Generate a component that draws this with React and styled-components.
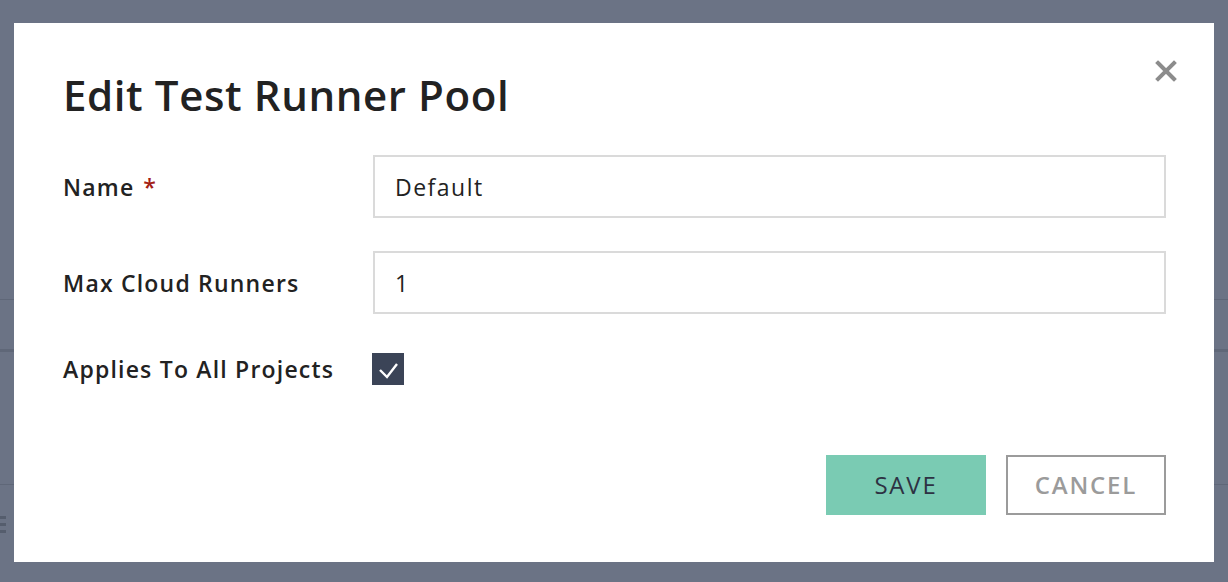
import React from 'react'
import styled, { createGlobalStyle } from 'styled-components'

const GlobalStyle = createGlobalStyle`
  html, body {
    margin: 0;
    padding: 0;
    height: 100%;
  }
  body {
    font-family: "Open Sans", "Liberation Sans", sans-serif;
    background: #6b7385;
    overflow: hidden;
  }
`;

// dimmed page lying behind the dialog
const Page = styled.div`
  width: 100vw;
  height: 100vh;
  display: flex;
  flex-direction: column;
  background: #6b7385;
`;

const PageRow = styled.div`
  height: ${p => p.h}px;
  flex-shrink: 0;
  border-bottom: ${p => p.line}px solid #5f6778;
`;

const MenuIcon = styled.div`
  margin-top: 31px;
  width: 6px;
  display: flex;
  flex-direction: column;
  gap: 4px;

  span {
    height: 3px;
    background: #555d6d;
  }
`;

const Overlay = styled.div`
  position: fixed;
  inset: 0;
  display: flex;
  padding: 23px 14px 0 14px;
  box-sizing: border-box;
`;

const Modal = styled.div`
  position: relative;
  width: 1200px;
  height: 539px;
  box-sizing: border-box;
  background: #ffffff;
  padding: 48px 48px 47px 49px;
  display: flex;
  flex-direction: column;
`;

const Close = styled.button`
  position: absolute;
  top: 37px;
  right: 37px;
  width: 22px;
  height: 22px;
  padding: 0;
  border: none;
  background: transparent;
  cursor: pointer;
  display: flex;
`;

const Title = styled.h1`
  margin: 0;
  font-size: 42px;
  line-height: 48px;
  font-weight: 600;
  letter-spacing: 0.6px;
  color: #222222;
`;

const Form = styled.div`
  margin-top: 36px;
  display: grid;
  grid-template-columns: 310px 1fr;
  row-gap: 33px;
  align-items: center;
`;

const Label = styled.label`
  font-size: 23px;
  font-weight: 600;
  letter-spacing: 1.2px;
  color: #222222;
  margin-top: ${p => (p.spaced ? '6px' : '0')};
`;

const Required = styled.span`
  color: #a32014;
  margin-left: 9px;
`;

const Input = styled.input`
  height: 63px;
  box-sizing: border-box;
  border: 2px solid #dadada;
  padding: 0 20px;
  font-family: inherit;
  font-size: 23px;
  letter-spacing: 1.5px;
  color: #222222;
  outline: none;
  width: 100%;
`;

const CheckBox = styled.div`
  width: 32px;
  height: 32px;
  background: #3b4457;
  display: flex;
  align-items: center;
  justify-content: center;
  margin-left: -1px;
  margin-top: 6px;
`;

const Footer = styled.div`
  margin-top: auto;
  display: flex;
  justify-content: flex-end;
  gap: 20px;
`;

const Button = styled.button`
  width: 160px;
  height: 60px;
  box-sizing: border-box;
  padding: 0 0 2px;
  font-family: inherit;
  font-size: 24px;
  font-weight: ${p => (p.primary ? 500 : 600)};
  letter-spacing: 1.8px;
  background: ${p => (p.primary ? '#7acbb3' : '#ffffff')};
  color: ${p => (p.primary ? '#2d3243' : '#9b9b9b')};
  border: ${p => (p.primary ? 'none' : '2px solid #9b9b9b')};
  cursor: pointer;
`;

const App = () => {
  return (
    <>
      <GlobalStyle />
      <Page>
        <PageRow h={299} line={1} />
        <PageRow h={49} line={3} />
        <PageRow h={132} line={1} />
        <MenuIcon>
          <span />
          <span />
          <span />
        </MenuIcon>
      </Page>
      <Overlay>
        <Modal>
          <Close aria-label="close">
            <svg width="22" height="22" viewBox="0 0 22 22">
              <path d="M3 3 L19 19 M19 3 L3 19" stroke="#8c8c8c" strokeWidth="4" strokeLinecap="square" />
            </svg>
          </Close>
          <Title>Edit Test Runner Pool</Title>
          <Form>
            <Label>
              Name<Required>*</Required>
            </Label>
            <Input defaultValue="Default" />
            <Label>Max Cloud Runners</Label>
            <Input defaultValue="1" />
            <Label spaced>Applies To All Projects</Label>
            <CheckBox>
              <svg width="32" height="32" viewBox="0 0 32 32">
                <path d="M8 17 L15 24 L25 11" fill="none" stroke="#ffffff" strokeWidth="2.4" />
              </svg>
            </CheckBox>
          </Form>
          <Footer>
            <Button primary>SAVE</Button>
            <Button>CANCEL</Button>
          </Footer>
        </Modal>
      </Overlay>
    </>
  )
}

export default App
